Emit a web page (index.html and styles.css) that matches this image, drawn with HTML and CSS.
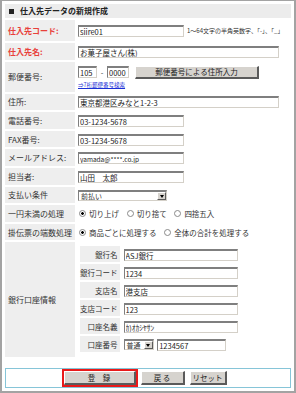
FILE: index.html
```html
<!DOCTYPE html>
<html>
  <head>
    <meta charset="UTF-8">
    <title>仕入先データの新規作成</title>
    <link rel="stylesheet" href="styles.css">
  </head>
  <body>
    <div class="frame">
      <h1 class="title"><span class="mark"></span>仕入先データの新規作成</h1>
      <table class="form">
        <tr class="first">
          <th class="req">仕入先コード:</th>
          <td><input class="text w105" value="siire01"><span class="hint">1〜64文字の半角英数字、「-」、「_」</span></td>
        </tr>
        <tr>
          <th class="req">仕入先名:</th>
          <td><input class="text w200" value="お菓子屋さん(株)"></td>
        </tr>
        <tr class="zip">
          <th>郵便番号:</th>
          <td>
            <div class="zip-line">
              <input class="text w18" value="105"><span class="dash">-</span><input class="text w21" value="0000">
              <button class="btn zip-btn">郵便番号による住所入力</button>
            </div>
            <a class="zip-link" href="#">⇒7桁郵便番号検索</a>
          </td>
        </tr>
        <tr>
          <th>住所:</th>
          <td><input class="text w200" value="東京都港区みなと1-2-3"></td>
        </tr>
        <tr>
          <th>電話番号:</th>
          <td><input class="text w105" value="03-1234-5678"></td>
        </tr>
        <tr>
          <th>FAX番号:</th>
          <td><input class="text w105" value="03-1234-5678"></td>
        </tr>
        <tr>
          <th>メールアドレス:</th>
          <td><input class="text w105 small" value="yamada@****.co.jp"></td>
        </tr>
        <tr>
          <th>担当者:</th>
          <td><input class="text w105" value="山田　太郎"></td>
        </tr>
        <tr>
          <th>支払い条件</th>
          <td><div class="select w89"><span class="val">前払い</span><span class="arrow"></span></div></td>
        </tr>
        <tr>
          <th>一円未満の処理</th>
          <td>
            <label class="opt"><input type="radio" class="radio" name="round" checked>切り上げ</label>
            <label class="opt"><input type="radio" class="radio" name="round">切り捨て</label>
            <label class="opt"><input type="radio" class="radio" name="round">四捨五入</label>
          </td>
        </tr>
        <tr>
          <th>掛伝票の端数処理</th>
          <td>
            <label class="opt"><input type="radio" class="radio" name="frac" checked>商品ごとに処理する</label>
            <label class="opt"><input type="radio" class="radio" name="frac">全体の合計を処理する</label>
          </td>
        </tr>
        <tr class="bank">
          <th>銀行口座情報</th>
          <td>
            <table class="bank-table">
              <tr>
                <th>銀行名</th>
                <td><input class="text w113" value="ASJ銀行"></td>
              </tr>
              <tr>
                <th>銀行コード</th>
                <td><input class="text w113" value="1234"></td>
              </tr>
              <tr>
                <th>支店名</th>
                <td><input class="text w113" value="港支店"></td>
              </tr>
              <tr>
                <th>支店コード</th>
                <td><input class="text w113" value="123"></td>
              </tr>
              <tr>
                <th>口座名義</th>
                <td><input class="text w113" value="ｶ)ｵｶｼﾔｻﾝ"></td>
              </tr>
              <tr>
                <th>口座番号</th>
                <td>
                  <div class="select w30"><span class="val">普通</span><span class="arrow"></span></div>
                  <input class="text w68" value="1234567">
                </td>
              </tr>
            </table>
          </td>
        </tr>
      </table>
      <div class="actions">
        <button class="btn submit">登　録</button>
        <button class="btn back">戻 る</button>
        <button class="btn reset">リセット</button>
      </div>
    </div>
  </body>
</html>
```

FILE: styles.css
```css
body {
  margin: 0;
  font-family: "Noto Sans CJK JP", "Noto Sans", sans-serif;
  font-size: 8px;
  color: #333;
}

.frame {
  width: 296px;
  height: 393px;
  box-sizing: border-box;
  border: 2px solid #a3a3a3;
  border-top-width: 1px;
  padding: 3px 3px 0 3px;
}

.title {
  margin: 0;
  height: 14px;
  line-height: 14px;
  background: #ececec;
  font-size: 8px;
  font-weight: bold;
  color: #222;
  padding-left: 4px;
  display: flex;
  align-items: center;
}

.mark {
  display: inline-block;
  width: 5px;
  height: 5px;
  background: #222;
  margin-right: 6px;
}

.form {
  width: 100%;
  border-collapse: separate;
  border-spacing: 0 2px;
  table-layout: fixed;
}

.form > tbody > tr > th {
  width: 70px;
  box-sizing: border-box;
  background: #eeeeee;
  text-align: left;
  font-weight: normal;
  padding: 0 0 0 3px;
  height: 16.6px;
  white-space: nowrap;
}

.form > tbody > tr > td {
  padding: 0 0 0 3px;
  font-size: 7.5px;
  white-space: nowrap;
}

.form > tbody > tr.first > th {
  height: 21px;
}

.form > tbody > tr.zip > th {
  height: 30px;
}

.form th.req {
  color: #e8403a;
  font-weight: bold;
}

.text {
  box-sizing: border-box;
  height: 12px;
  border-style: solid;
  border-width: 2px 1px 1px 1px;
  border-color: #7f7f7f #d4d0c8 #d4d0c8 #7f7f7f;
  padding: 0 1px;
  font-family: "Noto Sans CJK JP", sans-serif;
  font-size: 7.5px;
  color: #222;
  vertical-align: middle;
  outline: none;
}

.text.small {
  font-size: 6.5px;
}

.w18 { width: 19px; }
.w21 { width: 22px; }
.w30 { width: 30px; }
.w68 { width: 69px; }
.w89 { width: 89px; }
.w105 { width: 106px; }
.w113 { width: 114px; }
.w200 { width: 201px; }

.hint {
  font-size: 6px;
  margin-left: 3px;
  vertical-align: middle;
}

.zip-line {
  display: flex;
  align-items: center;
}

.dash {
  width: 10px;
  text-align: center;
}

.btn {
  box-sizing: border-box;
  background: #d6d3ce;
  border-style: solid;
  border-width: 1px 2px 2px 1px;
  border-color: #ffffff #5a5a5a #5a5a5a #ffffff;
  font-family: "Noto Sans CJK JP", sans-serif;
  font-size: 7.5px;
  color: #222;
  padding: 0;
  line-height: 1;
}

.zip-btn {
  width: 124px;
  height: 13px;
  margin-left: 6px;
}

.zip-link {
  display: block;
  margin-top: 3px;
  font-size: 5.5px;
  color: #1a2fd6;
  line-height: 6px;
}

.select {
  display: inline-flex;
  box-sizing: border-box;
  height: 11px;
  border-style: solid;
  border-width: 2px 1px 1px 1px;
  border-color: #7f7f7f #d4d0c8 #d4d0c8 #7f7f7f;
  background: #fff;
  vertical-align: middle;
}

.select .val {
  flex: 1;
  padding-left: 2px;
  font-size: 7px;
  line-height: 8px;
}

.select .arrow {
  width: 9px;
  box-sizing: border-box;
  background: #d6d3ce;
  border-style: solid;
  border-width: 1px;
  border-color: #fff #5a5a5a #5a5a5a #fff;
  display: flex;
  align-items: center;
  justify-content: center;
}

.select .arrow::after {
  content: "";
  border-left: 2px solid transparent;
  border-right: 2px solid transparent;
  border-top: 3px solid #000;
}

.opt {
  display: inline-flex;
  align-items: center;
  margin-right: 5px;
}

.radio {
  appearance: none;
  width: 7px;
  height: 7px;
  margin: 0 3px 0 1px;
  border: 1px solid #8a8a8a;
  border-radius: 50%;
  background: #fff;
}

.radio:checked {
  background: radial-gradient(circle, #000 0, #000 30%, #fff 45%);
}

.form > tbody > tr.bank > td {
  padding: 2px 0 3px 5px;
}

.bank-table {
  border-collapse: separate;
  border-spacing: 0 2px;
}

.bank-table th {
  width: 38px;
  height: 16px;
  box-sizing: border-box;
  background: #eeeeee;
  font-weight: normal;
  text-align: right;
  padding: 0 2px 0 0;
  font-size: 7.5px;
  white-space: nowrap;
}

.bank-table td {
  padding: 0 0 0 4px;
  white-space: nowrap;
}

.bank-table .select {
  margin-right: 2px;
}

.actions {
  margin-top: 9px;
  height: 20px;
  box-sizing: border-box;
  border: 1px solid #86c5d8;
  display: flex;
  align-items: center;
  justify-content: center;
  gap: 5px;
  padding-right: 6px;
}

.actions .btn {
  height: 14px;
}

.submit {
  width: 72px;
  outline: 2px solid #e81a1a;
  outline-offset: 0;
}

.back {
  width: 44px;
}

.reset {
  width: 37px;
}
```
